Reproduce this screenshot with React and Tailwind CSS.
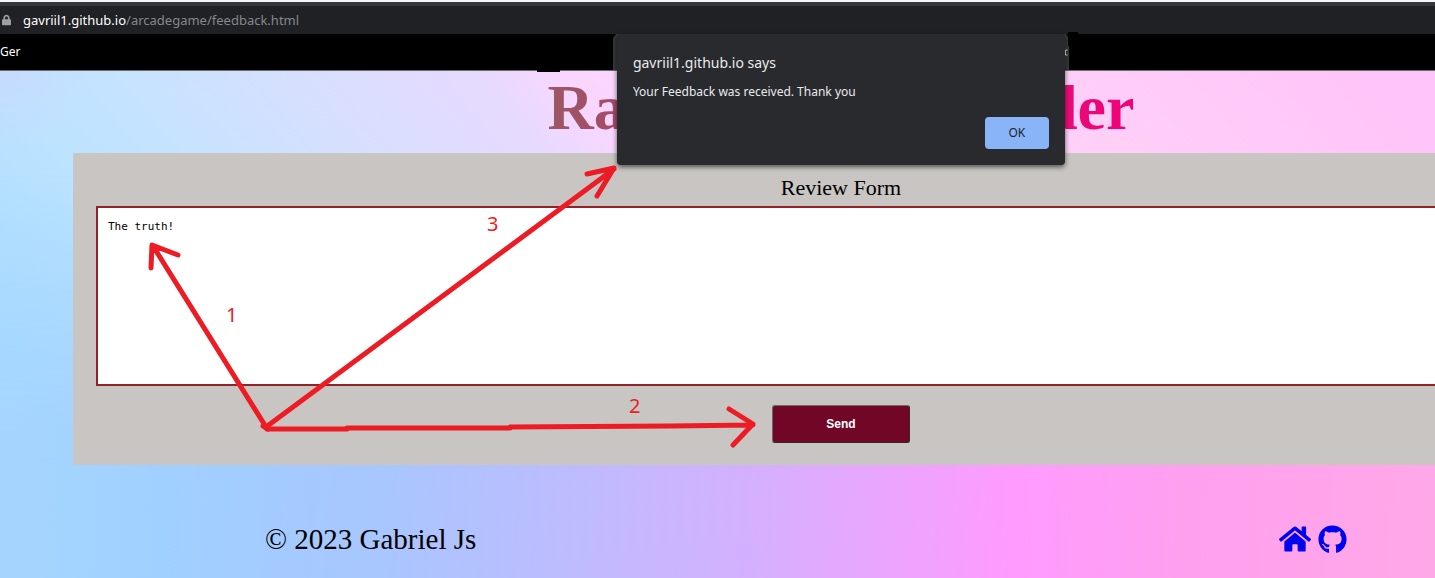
import { FaHome, FaGithub, FaLock } from "react-icons/fa";

function AddressBar() {
  return (
    <div className="border-t-2 border-[#f4f5f6] bg-[#35363a] pt-1">
      <div className="flex h-7 items-center gap-3 bg-[#202124] pl-[2px] font-['Noto_Sans',sans-serif] text-[13px] leading-7 text-[#9aa0a6]">
        <FaLock className="h-3 w-[9px]" />
        <span>
          <span className="text-white">gavriil1.github.io</span>
          <span className="text-[#85888d]">/arcadegame/feedback.html</span>
        </span>
      </div>
    </div>
  );
}

function AlertDialog() {
  return (
    <div
      role="alertdialog"
      aria-labelledby="alert-title"
      aria-describedby="alert-text"
      className="absolute top-0 left-1/2 z-10 flex h-[131px] w-[448px] -translate-x-1/2 flex-col rounded-[4px] bg-[#292a2d] px-4 pt-[19px] pb-4 font-['Noto_Sans',sans-serif] text-[#e8eaed] shadow-[0_2px_5px_rgba(0,0,0,0.6)]"
    >
      <h2 id="alert-title" className="text-[14px] leading-5">gavriil1.github.io says</h2>
      <p id="alert-text" className="mt-[10px] text-[12px] leading-[18px]">Your Feedback was received. Thank you</p>
      <button type="button" className="mt-auto h-8 w-16 self-end rounded-[4px] bg-[#8ab4f8] text-[12px] text-[#202124]">
        OK
      </button>
    </div>
  );
}

function Annotations() {
  return (
    <div className="pointer-events-none absolute top-0 left-0 z-20 text-[#ed1c24]">
      <svg width="770" height="460" viewBox="0 0 770 460" fill="none" stroke="currentColor" strokeWidth="5" strokeLinecap="round" strokeLinejoin="round" aria-hidden="true">
        <path d="M263 426 L268 429 M266 427 L153 246 M151 268 L152 245 L178 255" />
        <path d="M266 427 L614 169 M587 174 L614 168 L597 196" />
        <path d="M267 429 H347 M347 428 H510 M510 427 L670 426 L753 425 M729 409 L753 424 L733 445" />
      </svg>
      <div className="absolute inset-0 font-['Noto_Sans',sans-serif] text-[20px] leading-6">
        <span className="absolute top-[303px] left-[226px]">1</span>
        <span className="absolute top-[394px] left-[629px]">2</span>
        <span className="absolute top-[212px] left-[487px]">3</span>
      </div>
    </div>
  );
}

export default function App() {
  return (
    <div className="relative min-h-screen overflow-hidden bg-[linear-gradient(93deg,#a6d6ff_0%,#a0d0ff_13%,#a8c6ff_28%,#bcbcff_40%,#d4b0ff_53%,#ff9bff_71%,#ffa0ee_83%,#ffa8e8_100%)]">
      <AddressBar />
      <div className="relative w-[117.2%]">
        <div
          aria-hidden="true"
          className="absolute inset-x-0 top-0 h-[430px] bg-[radial-gradient(circle_at_0_30px,#c8daff_0px,transparent_90px),linear-gradient(50deg,#aadcff_5%,#bbe3ff_15%,#c6e3ff_22%,#d4e0ff_29%,#e6daff_39%,#fad6ff_44%,#ffd3fb_52%,#ffcff8_68%,#ffc4f9_83%)] mask-[linear-gradient(to_bottom,black_30%,transparent_100%)]"
        />
        <nav className="relative flex h-[37px] items-center border-b border-[#6a6a6a] bg-black font-['Noto_Sans',sans-serif] text-[12px] text-white">
          <a href="#general" className="block">Ger</a>
          <svg className="absolute top-[-2px] left-[520px] h-10 w-[560px]" viewBox="0 0 560 40" aria-hidden="true">
            <path fill="#000" d="M2 37h38v3H17v-2H2z M548 0h10v4h-10z" />
            <path fill="#35363a" d="M93 6l3-4h450l3 4v32H93z" />
            <path fill="#000" d="M548 0h10v14h-10z" />
            <path stroke="#ddd" strokeWidth="1" fill="none" d="M547.5 18h-2v5h2" />
          </svg>
        </nav>
        <AlertDialog />
        <header className="relative flex h-[82px] justify-center">
          <h1 className="flex w-[587px] justify-between bg-[linear-gradient(90deg,#9c5764_0%,#a64a68_14%,#e80d78_86%,#f00078_100%)] bg-clip-text font-['Liberation_Serif',serif] text-[64px] leading-[73px] font-bold text-transparent">
            <span>Ra</span>
            <span>der</span>
          </h1>
        </header>
        <main className="relative mx-[73px] bg-[#c9c5c2] px-[23px] pt-5 pb-[22px]">
          <form className="flex flex-col items-center" onSubmit={(e) => e.preventDefault()}>
            <label htmlFor="review" className="font-['Liberation_Serif',serif] text-[22px] leading-[30px] text-black">
              Review Form
            </label>
            <textarea
              id="review"
              defaultValue="The truth!"
              className="mt-[3px] block h-[180px] w-full resize-none border-2 border-[#922226] bg-white px-[10px] py-[11px] font-['DejaVu_Sans_Mono',monospace] text-[11px] leading-4 text-black outline-none"
            />
            <button
              type="submit"
              className="mt-[19px] h-[38px] w-[138px] rounded-[3px] border border-t-[#6b6b6b] border-r-[#2b2b2b] border-b-[#2b2b2b] border-l-[#6b6b6b] bg-[#720627] font-['Liberation_Sans',sans-serif] text-[12px] font-bold text-white"
            >
              Send
            </button>
          </form>
        </main>
        <footer className="relative flex items-center justify-between pt-[58px] pr-[335px] pb-5 pl-[265px]">
          <p className="font-['Liberation_Serif',serif] text-[29px] leading-8 text-black">© 2023 Gabriel Js</p>
          <div className="flex items-center gap-[7px] text-[#0000ee]">
            <a href="#home" aria-label="Home"><FaHome className="h-8 w-8" /></a>
            <a href="https://github.com" aria-label="GitHub"><FaGithub className="h-[29px] w-[29px]" /></a>
          </div>
        </footer>
      </div>
      <Annotations />
    </div>
  );
}
